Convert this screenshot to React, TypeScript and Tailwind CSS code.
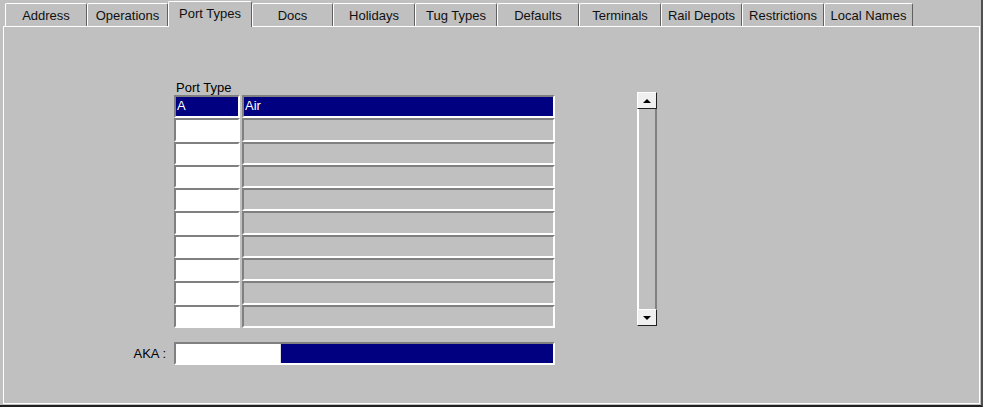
import React from 'react';

const tabs = [
    { label: 'Address', w: 'w-[82px]' },
    { label: 'Operations', w: 'w-[81px]' },
    { label: 'Port Types', w: 'w-[84px]', active: true },
    { label: 'Docs', w: 'w-[81px]' },
    { label: 'Holidays', w: 'w-[82px]' },
    { label: 'Tug Types', w: 'w-[82px]' },
    { label: 'Defaults', w: 'w-[82px]' },
    { label: 'Terminals', w: 'w-[82px]' },
    { label: 'Rail Depots', w: 'w-[81px]' },
    { label: 'Restrictions', w: 'w-[82px]' },
    { label: 'Local Names', w: 'w-[89px]' },
];

const rows = [
    { code: 'A', name: 'Air' },
    ...Array.from({ length: 9 }, () => ({ code: '', name: '' })),
];

function Cell({ text, selected, white }: { text: string; selected: boolean; white?: boolean }) {
    const bg = selected ? 'bg-[#000080] text-white' : white ? 'bg-white text-black' : 'bg-[#c0c0c0] text-black';
    return (
        <div className={`h-full border-2 border-t-[#808080] border-l-[#808080] border-b-white border-r-white ${bg} px-[1px] leading-[18px] text-[13px] overflow-hidden`}>
            {text}
        </div>
    );
}

function ArrowButton({ dir }: { dir: 'up' | 'down' }) {
    return (
        <div className="h-[17px] w-full bg-[#f0f0f0] border border-t-white border-l-white border-r-[#202020] border-b-[#202020] flex items-center justify-center">
            {dir === 'up' ? (
                <div className="w-0 h-0 border-l-[4px] border-r-[4px] border-b-[4px] border-l-transparent border-r-transparent border-b-black" />
            ) : (
                <div className="w-0 h-0 border-l-[4px] border-r-[4px] border-t-[4px] border-l-transparent border-r-transparent border-t-black" />
            )}
        </div>
    );
}

export default function App() {
    return (
        <div className="w-[983px] h-[407px] bg-[#c0c0c0] overflow-hidden border-r-2 border-b-[2px] border-r-[#505050] border-b-[#202020] font-['Liberation_Sans',Arial,sans-serif] text-black">
            {/* Tabs */}
            <div className="flex items-end h-[26px] pl-[5px]">
                {tabs.map((t) => (
                    <div
                        key={t.label}
                        className={`${t.w} relative z-10 flex items-center justify-center text-[13px] text-[#101010] bg-[#c0c0c0] border-t border-l border-t-white border-l-white border-r border-r-[#606060] rounded-t-[2px] ${t.active ? 'h-[26px] -mb-[1px] pb-[2px]' : 'h-[23px] pt-[2px]'}`}
                    >
                        {t.label}
                    </div>
                ))}
            </div>

            {/* Panel */}
            <div className="ml-[3px] w-[977px] h-[378px] border border-white">
                <div className="flex pt-[53px] pl-[106px]">
                    <div className="grid grid-cols-[64px_381px]">
                        <div />
                        <div className="h-[15px] text-[13px] leading-[15px] pl-[2px]">Port Type</div>

                        <div />
                        <div className="h-[233px] grid grid-rows-[repeat(10,1fr)]">
                            {rows.map((r, i) => (
                                <div key={i} className="grid grid-cols-[66px_313px] gap-x-[2px]">
                                    <Cell text={r.code} selected={i === 0} white />
                                    <Cell text={r.name} selected={i === 0} />
                                </div>
                            ))}
                        </div>

                        <div className="mt-[14px] h-[23px] flex items-center justify-end pr-[8px] text-[13px]">AKA :</div>
                        <div className="mt-[14px] h-[23px] flex border-2 border-t-[#808080] border-l-[#808080] border-b-white border-r-white">
                            <div className="w-[104px] bg-white" />
                            <div className="flex-1 bg-[#000080] border-l border-l-[#e0e0e0]" />
                        </div>
                    </div>

                    {/* Scrollbar */}
                    <div className="ml-[82px] mt-[12px] w-[20px] h-[234px] flex flex-col">
                        <ArrowButton dir="up" />
                        <div className="flex-1 bg-[#c0c0c0] border-l-2 border-r-2 border-l-white border-r-[#808080]" />
                        <ArrowButton dir="down" />
                    </div>
                </div>
            </div>
        </div>
    );
}
